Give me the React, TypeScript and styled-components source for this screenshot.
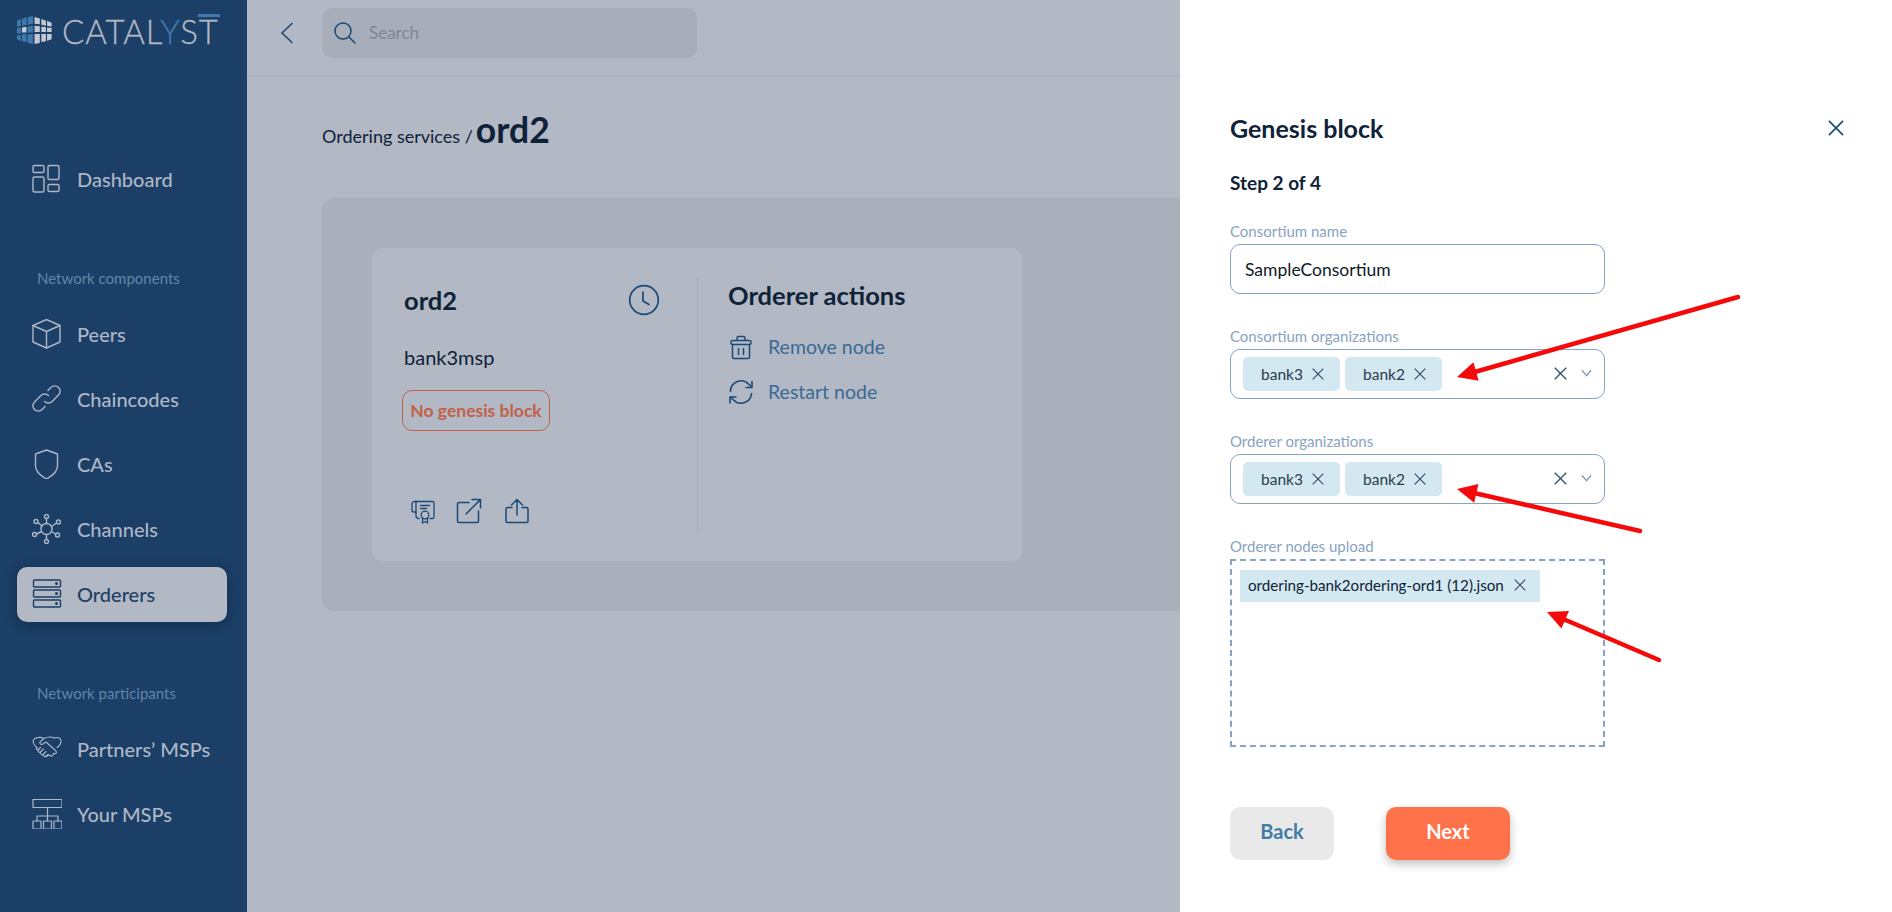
import React from 'react';
import styled, { createGlobalStyle } from 'styled-components';

const GlobalStyle = createGlobalStyle`
  html, body {
    margin: 0;
    padding: 0;
    height: 100%;
    overflow: hidden;
    font-family: "Lato", "Liberation Sans", sans-serif;
  }
  * { box-sizing: border-box; }
`;

const Page = styled.div`
  width: 1892px;
  height: 912px;
  display: flex;
  position: relative;
  overflow: hidden;
  background: #b2b8c4;
`;

/* sidebar */
const Sidebar = styled.aside`
  width: 247px;
  flex: none;
  background: #1b3f66;
  display: flex;
  flex-direction: column;
  padding: 15px 20px 0 17px;
`;

const Logo = styled.div`
  height: 30px;
  display: flex;
  align-items: center;
  gap: 10px;
  margin-bottom: 107px;
`;

const LogoText = styled.div`
  font-size: 33px;
  font-weight: 300;
  line-height: 30px;
  padding-top: 2px;
  color: #b2b8c4;
  letter-spacing: 0.9px;
  white-space: nowrap;
  -webkit-text-stroke: 0.3px currentColor;
  span { color: #3f79ad; }
  b {
    font-weight: 300;
    position: relative;
    &::before {
      content: "";
      position: absolute;
      left: -1px;
      right: -1px;
      top: 3px;
      height: 3px;
      background: #3f79ad;
    }
  }
`;

const NavItem = styled.div<{ $active?: boolean }>`
  height: 55px;
  padding: 0 0 1px 15px;
  display: flex;
  align-items: center;
  gap: 15px;
  font-size: 20px;
  font-weight: 500;
  border-radius: 10px;
  color: ${(p) => (p.$active ? '#1b3f66' : '#aeb7c6')};
  background: ${(p) => (p.$active ? '#b2b8c4' : 'transparent')};
  box-shadow: ${(p) => (p.$active ? '0 2px 12px rgba(10, 25, 45, 0.45)' : 'none')};
  svg { flex: none; }
`;

const NavGroup = styled.div`
  display: flex;
  flex-direction: column;
  gap: 10px;
`;

const NavLabel = styled.div`
  font-size: 15px;
  color: #5f87a9;
  padding-left: 20px;
  margin-top: 62px;
  margin-bottom: 20px;
  line-height: 18px;
`;

/* page behind the drawer */
const Main = styled.main`
  flex: 1;
  min-width: 0;
  overflow: hidden;
  display: flex;
  flex-direction: column;
`;

const TopBar = styled.header`
  height: 76px;
  flex: none;
  border-bottom: 1px solid #a3b0c6;
  display: flex;
  align-items: flex-start;
  padding: 8px 0 0 33px;
  gap: 27px;
`;

const BackButton = styled.div`
  width: 15px;
  height: 50px;
  display: flex;
  align-items: center;
`;

const Search = styled.div`
  width: 375px;
  height: 50px;
  border-radius: 10px;
  background: #a7adb9;
  display: flex;
  align-items: center;
  gap: 13px;
  padding: 0 0 1px 12px;
  font-size: 17px;
  color: #7e8796;
`;

const Content = styled.div`
  padding: 32px 0 0 75px;
`;

const Crumbs = styled.div`
  height: 40px;
  display: flex;
  align-items: baseline;
  gap: 3px;
  font-size: 18px;
  color: #0f2238;
  strong {
    font-size: 35.5px;
    font-weight: 700;
  }
`;

const Panel = styled.section`
  margin-top: 50px;
  width: 1000px;
  height: 413px;
  background: #a9afbb;
  border-radius: 12px;
  padding: 50px;
`;

const Card = styled.div`
  width: 650px;
  height: 313px;
  background: #b2b8c4;
  border-radius: 10px;
  padding: 30px 0;
  display: flex;
`;

const CardLeft = styled.div`
  width: 326px;
  border-right: 1px solid #a0adc2;
  padding: 2px 0 0 32px;
  display: flex;
  flex-direction: column;
`;

const CardHead = styled.div`
  display: flex;
  justify-content: space-between;
  align-items: center;
  padding-right: 37px;
  height: 40px;
  font-size: 25.5px;
  font-weight: 700;
  color: #0f2238;
`;

const Msp = styled.div`
  margin-top: 25px;
  font-size: 20px;
  line-height: 24px;
  color: #0f2238;
`;

const Badge = styled.div`
  margin: 21px 0 0 -2px;
  width: 148px;
  height: 41px;
  border: 1px solid #c4604a;
  border-radius: 10px;
  color: #c4604a;
  font-size: 17.5px;
  font-weight: 700;
  display: flex;
  align-items: center;
  justify-content: center;
  white-space: nowrap;
`;

const IconRow = styled.div`
  margin-top: auto;
  margin-bottom: 7px;
  display: flex;
  gap: 20px;
  padding-left: 6px;
  svg:last-child { margin-left: 2px; }
`;

const CardRight = styled.div`
  padding: 2px 0 0 30px;
  display: flex;
  flex-direction: column;
`;

const CardTitle = styled.div`
  font-size: 25.5px;
  font-weight: 700;
  line-height: 30px;
  color: #0f2238;
  margin-bottom: 14px;
`;

const ActionRow = styled.div`
  height: 45px;
  display: flex;
  align-items: center;
  gap: 14px;
  font-size: 19.5px;
  color: #3a6a94;
`;

/* drawer */
const Drawer = styled.aside`
  width: 712px;
  flex: none;
  background: #fff;
  padding: 111px 0 0 50px;
  display: flex;
  flex-direction: column;
  color: #0f2238;
`;

const DrawerHead = styled.div`
  display: flex;
  justify-content: space-between;
  align-items: center;
  height: 34px;
  padding-right: 48px;
  font-size: 25px;
  font-weight: 700;
`;

const StepText = styled.div`
  margin-top: 26px;
  font-size: 19px;
  font-weight: 700;
  line-height: 24px;
`;

const Field = styled.div<{ $top: number }>`
  width: 375px;
  margin-top: ${(p) => p.$top}px;
`;

const FieldLabel = styled.div`
  font-size: 15px;
  line-height: 16px;
  height: 21px;
  color: #88a3c1;
`;

const TextBox = styled.div`
  height: 50px;
  border: 1px solid #88a3c1;
  border-radius: 10px;
  padding-left: 14px;
  display: flex;
  align-items: center;
  font-size: 17.5px;
  color: #0f1a26;
`;

const SelectBox = styled(TextBox)`
  padding: 0 12px;
  gap: 5px;
`;

const Chip = styled.div`
  width: 97px;
  height: 34px;
  border-radius: 5px;
  background: #d3e8f1;
  display: flex;
  align-items: center;
  padding-left: 18px;
  gap: 9px;
  font-size: 15.5px;
  color: #2b3c4d;
`;

const SelectTools = styled.div`
  margin-left: auto;
  display: flex;
  align-items: center;
  gap: 14px;
  margin-top: -2px;
`;

const Dropzone = styled.div`
  height: 188px;
  border: 2px dashed #88a3c1;
  padding: 9px;
`;

const FileChip = styled.div`
  width: 300px;
  height: 32px;
  margin-left: -1px;
  background: #d3e8f1;
  display: flex;
  align-items: center;
  padding: 0 0 2px 8px;
  gap: 10px;
  font-size: 15.2px;
  color: #0f2238;
  white-space: nowrap;
`;

const Buttons = styled.div`
  margin-top: 60px;
  display: flex;
  gap: 52px;
`;

const Button = styled.div<{ $primary?: boolean }>`
  width: ${(p) => (p.$primary ? 124 : 104)}px;
  height: 53px;
  padding-bottom: 5px;
  border-radius: 10px;
  display: flex;
  align-items: center;
  justify-content: center;
  font-size: 20px;
  font-weight: 700;
  color: ${(p) => (p.$primary ? '#fff' : '#417ca5')};
  background: ${(p) => (p.$primary ? '#ff724a' : '#e9e9e9')};
  box-shadow: ${(p) => (p.$primary ? '0 4px 10px rgba(0, 0, 0, 0.25)' : 'none')};
`;

/* red annotation arrows drawn over the screenshot */
const Annotations = styled.svg`
  position: absolute;
  left: 0;
  top: 0;
  pointer-events: none;
`;

type IconProps = { size?: number; color?: string };

const NavIcon = ({ color = '#aeb7c6', children, w = 1.4 }: IconProps & { children: React.ReactNode; w?: number }) => (
  <svg width={30} height={30} viewBox="2 2 30 30" fill="none" stroke={color} strokeWidth={w} strokeLinecap="round" strokeLinejoin="round">
    {children}
  </svg>
);

const SmallIcon = ({ children, w = 1.5 }: { children: React.ReactNode; w?: number }) => (
  <svg width={26} height={26} viewBox="0 0 26 26" fill="none" stroke="#1b4a78" strokeWidth={w} strokeLinecap="round" strokeLinejoin="round">
    {children}
  </svg>
);

const DashboardIcon = () => (
  <NavIcon>
    <rect x="3" y="3.5" width="11" height="7" rx="1.5" />
    <rect x="18" y="3.5" width="11" height="14" rx="1.5" />
    <rect x="3" y="15" width="11" height="15" rx="1.5" />
    <rect x="18" y="22.5" width="11" height="7" rx="1.5" />
  </NavIcon>
);

const PeersIcon = () => (
  <NavIcon>
    <path d="M16.5 2.5 30 8.5V25L16.5 31 3 25V8.5Z" />
    <path d="M3 8.5 16.5 14.500 30 8.5M16.5 14.500V31" />
  </NavIcon>
);

const ChainIcon = () => (
  <NavIcon>
    <path d="M14.5 19.5a5.400 5.400 0 0 0 7.600 0l6.400-6.400a5.400 5.400 0 0 0-7.600-7.700l-3 3" />
    <path d="M18.500 13.500a5.400 5.400 0 0 0-7.600 0l-6.400 6.400a5.400 5.400 0 0 0 7.600 7.700l3-3" />
  </NavIcon>
);

const ShieldIcon = () => (
  <NavIcon>
    <path d="M16.500 3 27.500 7V19C27.500 25 22 29 16.500 32 11 29 5.500 25 5.500 19V7Z" />
  </NavIcon>
);

const ChannelsIcon = () => (
  <NavIcon>
    <circle cx="16.500" cy="17" r="5.500" />
    <circle cx="16.500" cy="4.500" r="2" />
    <circle cx="16.500" cy="29.500" r="2" />
    <circle cx="6" cy="9.500" r="2" />
    <circle cx="28.500" cy="10" r="2" />
    <circle cx="4.500" cy="22.500" r="2" />
    <circle cx="27.500" cy="23" r="2" />
    <path d="M16.500 6.500v5M16.500 22.500v5M8 10.500l4 3.500M26.500 11l-5 3.500M6.500 22l5-2.500M25.500 22l-4-2.500" />
  </NavIcon>
);

const ServerIcon = () => (
  <NavIcon color="#1b3f66">
    <rect x="3.500" y="3" width="27" height="7" rx="1" />
    <rect x="3.500" y="13" width="27" height="7" rx="1" />
    <rect x="3.500" y="23" width="27" height="7" rx="1" />
    <circle cx="26.500" cy="6.500" r=".8" fill="#1b3f66" />
    <circle cx="26.500" cy="16.500" r=".8" fill="#1b3f66" />
    <circle cx="26.500" cy="26.500" r=".8" fill="#1b3f66" />
  </NavIcon>
);

const HandshakeIcon = () => (
  <NavIcon w={1.1}>
    <path d="M5 6.500c3-1.500 6-1.500 9 0 3-1.500 7-2 10-.5 2-1 4-.5 6 .500 1.500 2 1 5-1 7.500l-2 1.500" />
    <path d="M5 6.500c-2 1-2.500 3.500-1 6 1 1.500 2 2 3 3" />
    <path d="M14 6.500 10 10c-1 1.500 1.500 3 3 2l3-2 10 9c1.500 2-1 3.500-2.500 2.500" />
    <path d="M7 15.500c-1.500 1.500 0 3 1.500 2-1 2 .5 3.500 2 2.500-.5 2 1 3 2.500 2.500 0 1.500 1.500 2.500 3 1.500l2-1.500" />
    <path d="M8.500 17.500l2-2M10.500 20l3-3M13 22.500l3-3M16 25l2.500-2.500c1 1 2.500 2.500 4 1 1-1 1-2 1-2.500" />
  </NavIcon>
);

const TreeIcon = () => (
  <NavIcon w={1.2}>
    <rect x="3" y="2.500" width="29" height="8" />
    <rect x="3" y="24" width="8" height="8" />
    <rect x="13.500" y="24" width="8" height="8" />
    <rect x="24" y="24" width="8" height="8" />
    <path d="M17.500 10.500V24M7 24v-5h21v5" />
  </NavIcon>
);

const ClockIcon = () => (
  <svg width="32" height="32" viewBox="0 0 32 32" fill="none" stroke="#1b4a78" strokeWidth="1.7" strokeLinecap="round" strokeLinejoin="round">
    <circle cx="16" cy="16" r="14.300" />
    <path d="M15 8v9l6 3.500" />
  </svg>
);

const CertificateIcon = () => (
  <SmallIcon w={1.3}>
    <path d="M5 3.500h17.500a1.500 1.500 0 0 1 1.500 1.500v14a1.500 1.500 0 0 1-1.500 1.500H20" />
    <path d="M5 3.500C3.500 3.500 2 4 2 6v6c0 1.500 1 2 2 2h2" />
    <path d="M6 3.500V18c0 1.500 1 2.500 3 2.500" />
    <path d="M10.500 7.500h9M10.500 10.500h6" />
    <circle cx="15" cy="17" r="3.800" />
    <path d="M12.500 20v5l2.500-1.500 2.500 1.500v-5" />
  </SmallIcon>
);

const ExternalIcon = () => (
  <SmallIcon>
    <path d="M13 4.500H3a1.500 1.500 0 0 0-1.500 1.500v17a1.500 1.500 0 0 0 1.500 1.500h18a1.500 1.500 0 0 0 1.500-1.500V13" />
    <path d="M10 16 24.500 1.500M16 1.500h8.500V10" />
  </SmallIcon>
);

const ShareIcon = () => (
  <SmallIcon>
    <path d="M8 9.500H3.500A1.500 1.500 0 0 0 2 11v12a1.500 1.500 0 0 0 1.500 1.500h19A1.500 1.500 0 0 0 24 23V11a1.500 1.500 0 0 0-1.500-1.500H18" />
    <path d="M13 17V1.500M7.500 7 13 1.500 18.500 7" />
  </SmallIcon>
);

const TrashIcon = () => (
  <SmallIcon>
    <rect x="3" y="6.500" width="20" height="4" rx="1.500" />
    <path d="M9 6.500V4a1.500 1.500 0 0 1 1.500-1.500h5A1.500 1.500 0 0 1 17 4v2.500" />
    <path d="M4.500 10.500V23a1.500 1.500 0 0 0 1.500 1.500h14a1.500 1.500 0 0 0 1.500-1.500V10.500" />
    <path d="M10.500 14.500v6M15.500 14.500v6" />
  </SmallIcon>
);

const RefreshIcon = () => (
  <SmallIcon w={1.6}>
    <path d="M2.500 12.500A10.500 10.500 0 0 1 20.500 5l3 3" />
    <path d="M24 2.500v6h-6" />
    <path d="M23.500 14.500A10.500 10.500 0 0 1 5.500 21l-3-3" />
    <path d="M2 24v-6h6" />
  </SmallIcon>
);

const SearchIcon = () => (
  <svg width="22" height="22" viewBox="0 0 22 22" fill="none" stroke="#1b4a78" strokeWidth="1.5" strokeLinecap="round">
    <circle cx="9" cy="9" r="8" />
    <path d="M15 15l6 6" />
  </svg>
);

const Chevron = () => (
  <svg width="14" height="22" viewBox="0 0 14 22" fill="none" stroke="#1b4a78" strokeWidth="1.6" strokeLinecap="round">
    <path d="M12 1.500 2 11l10 9.500" />
  </svg>
);

const Cross = ({ size = 12, color = '#2f4d6b' }: IconProps) => (
  <svg width={size} height={size} viewBox="0 0 12 12" fill="none" stroke={color} strokeWidth={1.2}>
    <path d="M.7.7l10.600 10.600M11.300.7.7 11.300" />
  </svg>
);

const Caret = () => (
  <svg width="11" height="8" viewBox="0 0 12 8" fill="none" stroke="#7d9abb" strokeWidth="1.4">
    <path d="M1 1l5 6 5-6" />
  </svg>
);

const CubeLogo = () => (
  <svg width="35" height="29" viewBox="0 0 46 30" preserveAspectRatio="none">
    <path d="M0 5l5-2v7l-5 1zM0 13l5-1v6l-5 0zM0 20h5v6l-5-2zM6.500 3l6-2v8l-6 1zM6.500 19h6v8l-6-1zM14 1l7-1v8l-7 1zM14 19h7v10l-7-1z" fill="#3f79ad" />
    <path d="M6.500 12l6-1v6h-6z" fill="#c3cad6" />
    <path d="M14 11l7-1v7h-7z" fill="#3f79ad" />
    <path d="M23 1l7 1.500v6L23 8zM32 3l6 2v5l-6-1zM39.500 5l6 2v4l-6-1zM23 10l7 .5v6H23zM32 11l6 .5v5h-6zM39.500 12l6 .5v4h-6zM23 18.500h7V28l-7 1zM32 18.500h6V26l-6 1zM39.500 18.500h6V24l-6 1.500z" fill="#c3cad6" />
  </svg>
);

const Arrow = ({ x1, y1, x2, y2 }: { x1: number; y1: number; x2: number; y2: number }) => {
  const a = Math.atan2(y2 - y1, x2 - x1);
  const len = 22;
  const wide = 0.45;
  const p1 = `${x2 - len * Math.cos(a - wide)},${y2 - len * Math.sin(a - wide)}`;
  const p2 = `${x2 - len * Math.cos(a + wide)},${y2 - len * Math.sin(a + wide)}`;
  return (
    <g>
      <line x1={x1} y1={y1} x2={x2 - 12 * Math.cos(a)} y2={y2 - 12 * Math.sin(a)} stroke="#f40a0a" strokeWidth="4.500" strokeLinecap="round" />
      <polygon points={`${x2},${y2} ${p1} ${p2}`} fill="#f40a0a" />
    </g>
  );
};

const Tag = ({ name }: { name: string }) => (
  <Chip>
    {name}
    <Cross />
  </Chip>
);

const OrgSelect = () => (
  <SelectBox>
    <Tag name="bank3" />
    <Tag name="bank2" />
    <SelectTools>
      <Cross size={13} />
      <Caret />
    </SelectTools>
  </SelectBox>
);

export default function App() {
  return (
    <Page>
      <GlobalStyle />
      <Sidebar>
        <Logo>
          <CubeLogo />
          <LogoText>
            CATAL<span>Y</span>S<b>T</b>
          </LogoText>
        </Logo>
        <NavItem><DashboardIcon />Dashboard</NavItem>
        <NavLabel>Network components</NavLabel>
        <NavGroup>
          <NavItem><PeersIcon />Peers</NavItem>
          <NavItem><ChainIcon />Chaincodes</NavItem>
          <NavItem><ShieldIcon />CAs</NavItem>
          <NavItem><ChannelsIcon />Channels</NavItem>
          <NavItem $active><ServerIcon />Orderers</NavItem>
        </NavGroup>
        <NavLabel>Network participants</NavLabel>
        <NavGroup>
          <NavItem><HandshakeIcon />Partners’ MSPs</NavItem>
          <NavItem><TreeIcon />Your MSPs</NavItem>
        </NavGroup>
      </Sidebar>

      <Main>
        <TopBar>
          <BackButton><Chevron /></BackButton>
          <Search><SearchIcon />Search</Search>
        </TopBar>
        <Content>
          <Crumbs>Ordering services / <strong>ord2</strong></Crumbs>
          <Panel>
            <Card>
              <CardLeft>
                <CardHead>ord2<ClockIcon /></CardHead>
                <Msp>bank3msp</Msp>
                <Badge>No genesis block</Badge>
                <IconRow>
                  <CertificateIcon />
                  <ExternalIcon />
                  <ShareIcon />
                </IconRow>
              </CardLeft>
              <CardRight>
                <CardTitle>Orderer actions</CardTitle>
                <ActionRow><TrashIcon />Remove node</ActionRow>
                <ActionRow><RefreshIcon />Restart node</ActionRow>
              </CardRight>
            </Card>
          </Panel>
        </Content>
      </Main>

      <Drawer>
        <DrawerHead>
          Genesis block
          <Cross size={16} color="#1b4a78" />
        </DrawerHead>
        <StepText>Step 2 of 4</StepText>
        <Field $top={28}>
          <FieldLabel>Consortium name</FieldLabel>
          <TextBox>SampleConsortium</TextBox>
        </Field>
        <Field $top={34}>
          <FieldLabel>Consortium organizations</FieldLabel>
          <OrgSelect />
        </Field>
        <Field $top={34}>
          <FieldLabel>Orderer organizations</FieldLabel>
          <OrgSelect />
        </Field>
        <Field $top={34}>
          <FieldLabel>Orderer nodes upload</FieldLabel>
          <Dropzone>
            <FileChip>
              ordering-bank2ordering-ord1 (12).json
              <Cross />
            </FileChip>
          </Dropzone>
        </Field>
        <Buttons>
          <Button>Back</Button>
          <Button $primary>Next</Button>
        </Buttons>
      </Drawer>

      <Annotations width="1892" height="912" viewBox="0 0 1892 912">
        <Arrow x1={1738} y1={297} x2={1457} y2={377} />
        <Arrow x1={1640} y1={531} x2={1457} y2={489} />
        <Arrow x1={1659} y1={660} x2={1547} y2={612} />
      </Annotations>
    </Page>
  );
}
